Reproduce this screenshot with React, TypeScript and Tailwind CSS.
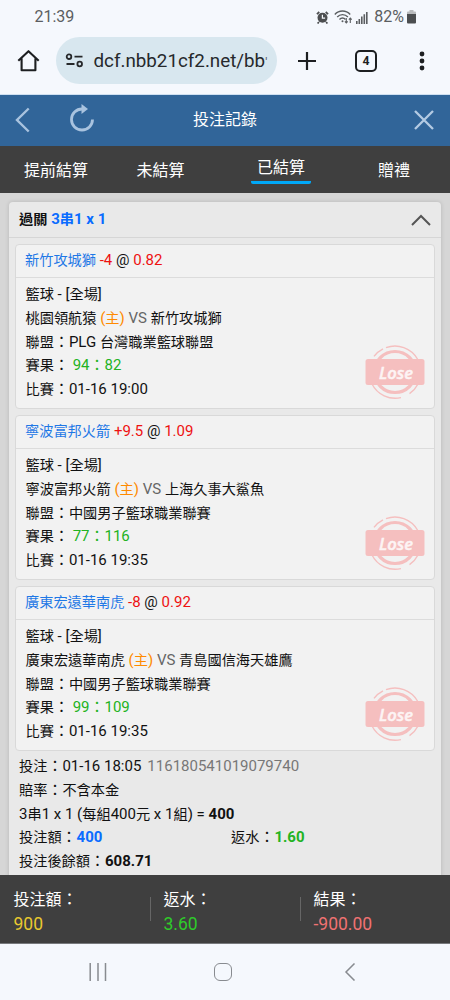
import clsx from "clsx";

type Bet = {
  pick: string;
  handicap: string;
  odds: string;
  home: string;
  away: string;
  league: string;
  score: string;
  time: string;
};

const bets: Bet[] = [
  {
    pick: "新竹攻城獅",
    handicap: "-4",
    odds: "0.82",
    home: "桃園領航猿",
    away: "新竹攻城獅",
    league: "PLG 台灣職業籃球聯盟",
    score: "94：82",
    time: "01-16 19:00",
  },
  {
    pick: "寧波富邦火箭",
    handicap: "+9.5",
    odds: "1.09",
    home: "寧波富邦火箭",
    away: "上海久事大鯊魚",
    league: "中國男子籃球職業聯賽",
    score: "77：116",
    time: "01-16 19:35",
  },
  {
    pick: "廣東宏遠華南虎",
    handicap: "-8",
    odds: "0.92",
    home: "廣東宏遠華南虎",
    away: "青島國信海天雄鷹",
    league: "中國男子籃球職業聯賽",
    score: "99：109",
    time: "01-16 19:35",
  },
];

const tabs = [
  { label: "提前結算", active: false },
  { label: "未結算", active: false },
  { label: "已結算", active: true },
  { label: "贈禮", active: false },
];

const totals = [
  { label: "投注額：", value: "900", color: "text-[#e9c92f]" },
  { label: "返水：", value: "3.60", color: "text-[#2fcb2a]" },
  { label: "結果：", value: "-900.00", color: "text-[#f07272]" },
];

// Chinese runs are set a touch smaller than the latin text beside them
function Mix({ children }: { children: string }) {
  return (
    <>
      {children.split(/([\u4e00-\u9fff]+)/).map((part, i) =>
        i % 2 ? (
          <span key={i} className="text-[0.947em]">
            {part}
          </span>
        ) : (
          part
        )
      )}
    </>
  );
}

function StatusBar() {
  return (
    <div className="flex h-[34px] items-center justify-between pr-[34px] pl-[34.5px] text-[16px] text-[#5b5e61]">
      <span>21:39</span>
      <div className="flex items-center">
        <svg width="13" height="13" viewBox="0 0 13 13" fill="none">
          <circle cx="6.5" cy="6.8" r="5" fill="#4c4e50" />
          <path d="M.9 3.2 3.3 1M12.1 3.2 9.7 1M2.9 11l-1.3 1.5M10.1 11l1.3 1.5" stroke="#4c4e50" strokeWidth="1.7" />
          <path d="M6.4 3.8v3.3h2.7" stroke="#f5f8fd" strokeWidth="1.2" />
        </svg>
        <svg className="ml-[5px]" width="19" height="14" viewBox="0 0 19 14" fill="none" stroke="#5b5e61" strokeWidth="1.4">
          <path d="M.8 4.4C5-.1 12-.1 16.2 4.4M3.2 7c3-3.2 7.7-3.2 10.7 0M5.5 9.4c1.7-1.8 4.3-1.8 6 0" />
          <circle cx="8.5" cy="11.3" r="1" fill="#5b5e61" stroke="none" />
          <path d="M12.3 8v5M10.9 11.4l1.4 1.6 1.4-1.6M16.3 13V8M14.9 9.6 16.3 8l1.4 1.6" strokeWidth="1.1" />
        </svg>
        <svg className="ml-[3px]" width="12" height="13" viewBox="0 0 12 13" fill="#5b5e61">
          <path d="M0 10h1.6v3H0zM2.5 8h1.6v5H2.5zM5 5.6h1.6V13H5zM7.5 3.2h1.6V13H7.5zM10 1h1.6v12H10z" />
        </svg>
        <span className="ml-[6px]">82%</span>
        <svg className="ml-[3px]" width="9" height="14" viewBox="0 0 9 14">
          <path d="M2.5 0h4v1.5h-4zM1 1.5h7A1 1 0 0 1 9 2.5V4H0V2.500a1 1 0 0 1 1-1z" fill="#b9bbbd" />
          <path d="M0 4h9v8.500a1 1 0 0 1-1 1H1a1 1 0 0 1-1-1z" fill="#4c4e50" />
        </svg>
      </div>
    </div>
  );
}

function UrlBar() {
  return (
    <div className="flex h-[61px] items-center border-b border-[#cfe0f1] pb-[7px]">
      <svg className="ml-[17px]" width="23" height="23" viewBox="0 0 23 23" fill="none" stroke="#1d1f21" strokeWidth="2.1">
        <path d="M1.3 11.700 11.500 2.200l10.200 9.500M4.600 9.500v11.700h13.800V9.500" strokeLinejoin="round" />
      </svg>
      <div className="ml-[16px] flex h-[47px] w-[221px] items-center rounded-full bg-[#d8e7ef]">
        <svg className="ml-[9px] shrink-0" width="19" height="15" viewBox="0 0 19 15" fill="none" stroke="#26282a" strokeWidth="1.8">
          <circle cx="4" cy="3.700" r="2.300" />
          <circle cx="14.700" cy="11" r="2.300" />
          <path d="M9.500 3.700h8M1.500 11h8" />
        </svg>
        <span className="ml-[9.5px] pt-[2px] text-[18.8px] whitespace-nowrap text-[#26292c]">
          dcf.nbb21cf2.net/bb<span className="text-[12px] text-[#555]">'</span>
        </span>
      </div>
      <svg className="ml-[20px]" width="20" height="20" viewBox="0 0 20 20" stroke="#1d1f21" strokeWidth="2.200">
        <path d="M10 1v18M1 10h18" />
      </svg>
      <div className="ml-[38px] flex h-[22px] w-[22px] items-center justify-center rounded-[5px] border-2 border-[#1d1f21] text-[13.5px] font-bold text-[#1d1f21]">
        <span className="scale-x-90">4</span>
      </div>
      <svg className="ml-[42px]" width="6" height="20" viewBox="0 0 6 20" fill="#1d1f21">
        <circle cx="3" cy="3" r="2.400" />
        <circle cx="3" cy="10" r="2.400" />
        <circle cx="3" cy="17" r="2.400" />
      </svg>
    </div>
  );
}

function LoseStamp() {
  return (
    <svg className="absolute right-[9px] bottom-[8.5px]" width="60" height="56" viewBox="0 0 60 56" fill="none" stroke="#f5bfbf">
      <circle cx="30" cy="28" r="20.500" strokeWidth="3.200" />
      <path d="M9 12.300A26 26 0 0 1 18 4.800M21 3.600A26 26 0 0 1 52.500 15M7 40A26 26 0 0 0 36 53.600M44.500 49.700A26 26 0 0 0 53 40" strokeWidth="1.400" />
      <rect x=".5" y="15" width="59" height="26" rx="2.500" fill="#f5bfbf" stroke="none" />
      <text
        x="14"
        y="34.500"
        textLength="34"
        lengthAdjust="spacingAndGlyphs"
        className="fill-[#fdf4f4] stroke-[#fdf4f4] stroke-[0.5px] font-['Open_Sans'] text-[17px] font-semibold italic"
      >
        Lose
      </text>
    </svg>
  );
}

function BetCard({ bet }: { bet: Bet }) {
  return (
    <div className="relative h-[165px] rounded-[4px] border border-[#d9d9d9] bg-[#f2f2f2]">
      <div className="flex h-[33px] items-center border-b border-[#dcdcdc] pl-[9px] whitespace-pre">
        <p>
          <span className="text-[#1f78e6]">
            <Mix>{bet.pick}</Mix>
          </span>{" "}
          <span className="text-[#ee1111]">{bet.handicap}</span> @{" "}
          <span className="text-[#ee1111]">{bet.odds}</span>
        </p>
      </div>
      <div className="pt-[5px] pl-[9.5px]">
        <p>
          <Mix>籃球 - [全場]</Mix>
        </p>
        <p>
          <Mix>{bet.home}</Mix>{" "}
          <span className="text-[#ff8a00]">
            <Mix>(主)</Mix>
          </span>{" "}
          <span className="text-[#666]">VS</span> <Mix>{bet.away}</Mix>
        </p>
        <p>
          <Mix>{`聯盟：${bet.league}`}</Mix>
        </p>
        <p>
          <Mix>賽果：</Mix>{" "}
          <span className="text-[#22b322]">{bet.score}</span>
        </p>
        <p>
          <Mix>{`比賽：${bet.time}`}</Mix>
        </p>
      </div>
      <LoseStamp />
    </div>
  );
}

export default function App() {
  return (
    <div
      lang="zh-Hant"
      className="flex h-[1000px] w-[450px] flex-col overflow-hidden bg-[#f5f8fd] font-[Roboto,'Noto_Sans_CJK_TC',sans-serif]"
    >
      <StatusBar />
      <UrlBar />

      <header className="flex h-[51px] shrink-0 items-center justify-between bg-[#316599] pr-[16px] pb-[2px] pl-[15px] text-white">
        <div className="flex w-[82px] items-center">
          <svg width="15" height="26" viewBox="0 0 15 26" fill="none" stroke="#a9c3df" strokeWidth="2.400">
            <path d="M13.700 1.500 2 13l11.700 11.500" />
          </svg>
          <svg className="mb-[3px] ml-[39px] shrink-0" width="26" height="28" viewBox="0 0 26 28" fill="none">
            <path d="M13 5A10.500 10.500 0 1 0 23.500 15.500" stroke="#a9c3df" strokeWidth="2.800" />
            <path d="M12.500 0 19 5l-6.500 5z" fill="#a9c3df" />
          </svg>
        </div>
        <h1 className="pt-px text-[16px]">投注記錄</h1>
        <div className="flex w-[81px] justify-end">
          <svg width="20" height="20" viewBox="0 0 20 20" stroke="#b4cbe3" strokeWidth="2.300">
            <path d="M1 1l18 18M19 1 1 19" />
          </svg>
        </div>
      </header>

      <nav className="grid h-[47px] shrink-0 grid-cols-[112px_97px_144px_82px] bg-[#3f3f3f] text-[16px] text-white">
        {tabs.map((tab) => (
          <div key={tab.label} className="flex justify-center">
            <span
              className={clsx(
                "leading-[24px]",
                tab.active
                  ? "mt-[10px] h-[28px] w-[60px] rounded-b-[2px] border-b-[3px] border-[#00a8f8] text-center"
                  : "mt-[13px]"
              )}
            >
              {tab.label}
            </span>
          </div>
        ))}
      </nav>

      <main className="min-h-0 flex-1 overflow-hidden bg-[#d6d6d6] px-[9px] pt-[9px] text-[15px] leading-[23.75px] text-[#111]">
        <section className="h-[700px] rounded-[4px] bg-[#e9e9e9] shadow-[0_0_4px_rgba(0,0,0,0.15)]">
          <div className="flex h-[36px] items-center justify-between border-b border-[#d6d6d6] pr-[10px] pl-[10px] font-bold">
            <p>
              <Mix>過關</Mix>{" "}
              <span className="text-[#0a6cff]">
                <Mix>3串1 x 1</Mix>
              </span>
            </p>
            <svg width="20" height="12" viewBox="0 0 20 12" fill="none" stroke="#555" strokeWidth="2">
              <path d="m1 11 9-9 9 9" />
            </svg>
          </div>
          <div className="flex flex-col gap-[6px] px-[6px] pt-[6px]">
            {bets.map((bet) => (
              <BetCard key={bet.pick} bet={bet} />
            ))}
          </div>
          <div className="pt-[4px] pl-[10px]">
            <p>
              <Mix>投注：01-16 18:05</Mix>
              <span className="ml-[6px] text-[#777]">116180541019079740</span>
            </p>
            <p>
              <Mix>賠率：不含本金</Mix>
            </p>
            <p>
              <Mix>3串1 x 1 (每組400元 x 1組) = </Mix>
              <b>400</b>
            </p>
            <div className="flex">
              <p className="w-[212px]">
                <Mix>投注額：</Mix>
                <b className="text-[#0a6cff]">400</b>
              </p>
              <p>
                <Mix>返水：</Mix>
                <b className="text-[#22b322]">1.60</b>
              </p>
            </div>
            <p>
              <Mix>投注後餘額：</Mix>
              <b>608.71</b>
            </p>
          </div>
        </section>
      </main>

      <footer className="grid h-[69px] shrink-0 grid-cols-3 items-center border-b border-[#77797c] bg-[#3f3f3f]">
        {totals.map((total, i) => (
          <div key={total.label} className="flex items-center">
            <div className={clsx("h-[24px] w-px", i > 0 && "bg-[#666]")} />
            <div className="pt-[5px] pl-[12.5px]">
              <p className="text-[16px] leading-[24px] text-white">{total.label}</p>
              <p className={clsx("text-[17.5px] leading-[24px]", total.color)}>{total.value}</p>
            </div>
          </div>
        ))}
      </footer>

      <div className="flex h-[56px] shrink-0 items-center pl-[89px]">
        <svg width="18" height="18" viewBox="0 0 18 18" stroke="#888b90" strokeWidth="1.500">
          <path d="M1.200 0v18M9 0v18M16.500 0v18" />
        </svg>
        <div className="ml-[107px] h-[18px] w-[18px] rounded-[6px] border-[1.5px] border-[#888b90]" />
        <svg className="ml-[112px]" width="12" height="18" viewBox="0 0 12 18" fill="none" stroke="#888b90" strokeWidth="1.500">
          <path d="M10.500.5 2 9l8.500 8.500" />
        </svg>
      </div>
    </div>
  );
}
